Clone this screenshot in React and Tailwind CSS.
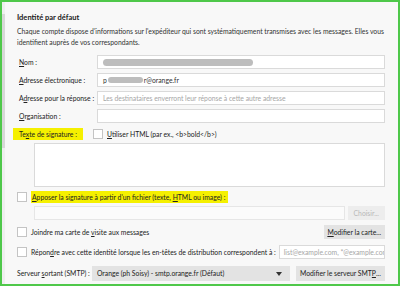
import React from 'react'

function Box({ className = '' }) {
  return <div className={`w-[10px] h-[10px] shrink-0 bg-white border border-[#c4c4c4] ${className}`}></div>
}

function Field({ children, placeholder }) {
  return (
    <div className="flex-1 h-[14px] bg-white border border-[#dadada] flex items-center px-[5px] overflow-hidden whitespace-nowrap">
      {placeholder ? <span className="text-[#a6a6a6]">{placeholder}</span> : children}
    </div>
  )
}

function Row({ label, children }) {
  return (
    <div className="flex items-center h-[14px] mt-[4px] first:mt-0">
      <div className="w-[80px] pl-[2px] shrink-0 whitespace-nowrap text-[#222]">{label}</div>
      {children}
    </div>
  )
}

function Btn({ children, disabled }) {
  return (
    <div className={`h-full flex items-center justify-center px-[4px] whitespace-nowrap ${disabled ? 'text-[#b8b8b8] bg-[#ededed]' : 'text-[#222] bg-[#e3e3e3]'}`}>
      {children}
    </div>
  )
}

export default function App() {
  return (
    <div className="w-[400px] h-[286px] border-2 border-[#4fc84a] bg-[#f8f8f8] flex font-['Lato',sans-serif] text-[6.8px] leading-[11px] text-[#222] overflow-hidden">
      {/* bord gauche / défilement */}
      <div className="w-[3px] shrink-0 flex flex-col bg-[#efefef]">
        <div className="h-[12px]"></div>
        <div className="h-[134px] bg-[#d8d8d8]"></div>
      </div>

      <div className="flex-1 flex flex-col pl-[12px] pr-[15px] pt-[10px]">
        <div className="font-bold text-[7.5px] leading-[12px] text-[#1a1a1a]">Identité par défaut</div>
        <p className="mt-[2px] text-[#333] -mr-[8px]">
          Chaque compte dispose d'informations sur l'expéditeur qui sont systématiquement transmises avec les messages. Elles vous identifient auprès de vos correspondants.
        </p>

        <div className="mt-[7px] flex flex-col">
          <Row label={<><u>N</u>om :</>}>
            <Field>
              <span className="inline-block w-[150px] h-[7px] rounded-full bg-[#bdbdbd]"></span>
            </Field>
          </Row>
          <Row label={<><u>A</u>dresse électronique :</>}>
            <Field>
              <span className="flex items-center">
                <span className="text-[#333]">p</span>
                <span className="inline-block w-[35px] h-[6px] rounded-full bg-[#bdbdbd] mx-[1px]"></span>
                <span className="text-[#333]">r@orange.fr</span>
              </span>
            </Field>
          </Row>
          <Row label={<>A<u>d</u>resse pour la réponse :</>}>
            <Field placeholder="Les destinataires enverront leur réponse à cette autre adresse" />
          </Row>
          <Row label={<><u>O</u>rganisation :</>}>
            <Field />
          </Row>
        </div>

        <div className="mt-[5px] flex items-center h-[12px]">
          <div className="w-[80px] shrink-0 -ml-[4px] pr-[3px] whitespace-nowrap">
            <span className="bg-[#f5f000] h-[12px] pl-[6px] pr-[6px] inline-flex items-center">Te<u>x</u>te de signature :</span>
          </div>
          <Box />
          <span className="ml-[4px] whitespace-nowrap"><u>U</u>tiliser HTML (par ex., &lt;b&gt;bold&lt;/b&gt;)</span>
        </div>

        <div className="mt-[3px] ml-[17px] h-[44px] bg-white border border-[#dadada]"></div>

        <div className="mt-[4px] flex items-center h-[12px]">
          <Box />
          <span className="ml-[4px] bg-[#f5f000] h-[12px] px-[1px] pr-[3px] inline-flex items-center whitespace-nowrap">
            <u>A</u>pposer la signature à partir d'un fichier (texte,&nbsp;<u>H</u>TML ou image) :
          </span>
        </div>

        <div className="mt-[3px] ml-[17px] flex h-[14px] gap-[3px]">
          <div className="flex-1 bg-[#fbfbfb] border border-[#e6e6e6]"></div>
          <div className="w-[37px] shrink-0"><Btn disabled>Choisir...</Btn></div>
        </div>

        <div className="mt-[5px] flex items-center h-[14px]">
          <Box />
          <span className="ml-[4px] flex-1 whitespace-nowrap">Joindre ma carte de <u>v</u>isite aux messages</span>
          <div className="w-[61px] shrink-0 h-full"><Btn><u>M</u>odifier la carte...</Btn></div>
        </div>

        <div className="mt-[6px] flex items-center h-[14px]">
          <Box />
          <span className="ml-[4px] flex-1 whitespace-nowrap">Répon<u>d</u>re avec cette identité lorsque les en-têtes de distribution correspondent à :</span>
          <div className="w-[106px] shrink-0 h-full bg-white border border-[#dadada] flex items-center px-[4px] overflow-hidden whitespace-nowrap text-[#a6a6a6]">
            list@example.com, *@example.com
          </div>
        </div>

        <div className="mt-[7px] flex items-center h-[15px]">
          <div className="w-[75px] shrink-0 whitespace-nowrap">Serveur <u>s</u>ortant (SMTP) :</div>
          <div className="w-[198px] shrink-0 h-full bg-[#e3e3e3] flex items-center pl-[5px] pr-[8px]">
            <span className="flex-1 whitespace-nowrap">Orange (ph Soisy) - smtp.orange.fr (Défaut)</span>
            <svg width="6" height="4" viewBox="0 0 6 4"><path d="M0 0h6L3 4z" fill="#333" /></svg>
          </div>
          <div className="flex-1 ml-[6px] h-full"><Btn>Modifier le serveur SMT<u>P</u>...</Btn></div>
        </div>
      </div>
    </div>
  )
}
